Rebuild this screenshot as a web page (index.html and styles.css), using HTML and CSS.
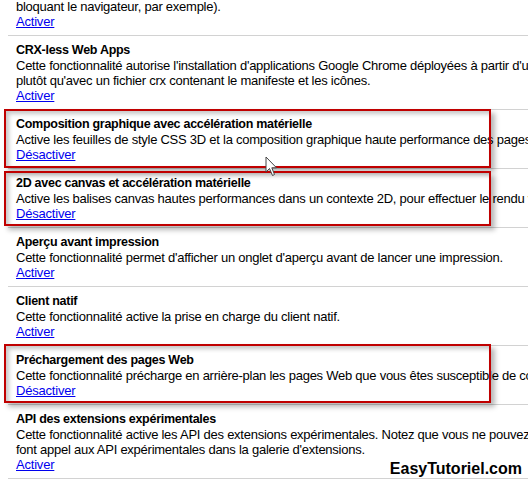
FILE: index.html
```html
<!DOCTYPE html>
<html lang="fr">
<head>
<meta charset="utf-8">
<title>Labs</title>
<link rel="stylesheet" href="styles.css">
</head>
<body>
<div class="list">
  <div class="row partial">
    <div class="desc">bloquant le navigateur, par exemple).</div>
    <a class="link" href="#">Activer</a>
  </div>
  <div class="row">
    <div class="title">CRX-less Web Apps</div>
    <div class="desc">Cette fonctionnalité autorise l'installation d'applications Google Chrome déployées à partir d'une URL de manifeste,<br>plutôt qu'avec un fichier crx contenant le manifeste et les icônes.</div>
    <a class="link" href="#">Activer</a>
  </div>
  <div class="row hl hl-a">
    <div class="title">Composition graphique avec accélération matérielle</div>
    <div class="desc">Active les feuilles de style CSS 3D et la composition graphique haute performance des pages Web à l'aide du matériel.</div>
    <a class="link" href="#">Désactiver</a>
    <svg class="cursor" width="14" height="22" viewBox="0 0 14 22"><path d="M1 1 L1 16 L4.5 12.5 L7.5 19.5 L9.5 18.5 L6.8 11.8 L11.5 11.8 Z" fill="#fff" stroke="#444" stroke-width="1" stroke-linejoin="round"/></svg>
  </div>
  <div class="row hl hl-b">
    <div class="title">2D avec canvas et accélération matérielle</div>
    <div class="desc">Active les balises canvas hautes performances dans un contexte 2D, pour effectuer le rendu via le processeur graphique (GPU).</div>
    <a class="link" href="#">Désactiver</a>
  </div>
  <div class="row">
    <div class="title">Aperçu avant impression</div>
    <div class="desc">Cette fonctionnalité permet d'afficher un onglet d'aperçu avant de lancer une impression.</div>
    <a class="link" href="#">Activer</a>
  </div>
  <div class="row">
    <div class="title">Client natif</div>
    <div class="desc">Cette fonctionnalité active la prise en charge du client natif.</div>
    <a class="link" href="#">Activer</a>
  </div>
  <div class="row hl hl-c">
    <div class="title">Préchargement des pages Web</div>
    <div class="desc">Cette fonctionnalité précharge en arrière-plan les pages Web que vous êtes susceptible de consulter.</div>
    <a class="link" href="#">Désactiver</a>
  </div>
  <div class="row">
    <div class="title">API des extensions expérimentales</div>
    <div class="desc">Cette fonctionnalité active les API des extensions expérimentales. Notez que vous ne pouvez pas importer les extensions qui<br>font appel aux API expérimentales dans la galerie d'extensions.</div>
    <a class="link" href="#">Activer</a>
    <div class="brand">EasyTutoriel.com</div>
  </div>
</div>
</body>
</html>
```

FILE: styles.css
```css
html, body {
  margin: 0;
  padding: 0;
  background: #fff;
  overflow: hidden;
}

body {
  width: 528px;
  height: 483px;
  font-family: "Liberation Sans", Arial, sans-serif;
  font-size: 13px;
  color: #000;
}

.list {
  padding-left: 8px;
}

.row {
  position: relative;
  padding: 6px 0 5px 8px;
  border-bottom: 1px solid #d2d2d2;
  white-space: nowrap;
}

.row.partial {
  margin-top: -1px;
  padding-top: 0;
}

.title {
  font-size: 12.5px;
  font-weight: bold;
  line-height: 16px;
  letter-spacing: -0.28px;
}

.desc {
  line-height: 15px;
  letter-spacing: -0.25px;
}

.link {
  display: block;
  width: max-content;
  line-height: 16px;
  color: #0000ee;
  text-decoration: underline;
  letter-spacing: -0.2px;
}

.hl::after {
  content: "";
  position: absolute;
  left: -4px;
  width: 483px;
  border: 2px solid #c00000;
  box-shadow: 4px 4px 5px rgba(0, 0, 0, 0.28), inset 3px 3px 4px rgba(0, 0, 0, 0.22);
  pointer-events: none;
}

.hl-a::after {
  top: -1px;
  bottom: 0;
}

.hl-b::after {
  top: 2px;
  bottom: 1px;
}

.hl-c::after {
  top: -2px;
  bottom: 1px;
}

.cursor {
  position: absolute;
  left: 257px;
  top: 46px;
  z-index: 2;
}

.brand {
  position: absolute;
  right: 6px;
  top: 55px;
  font-size: 16px;
  line-height: 18px;
  font-weight: bold;
  color: #000;
  text-shadow: 0 0 2px #fff;
}
```
